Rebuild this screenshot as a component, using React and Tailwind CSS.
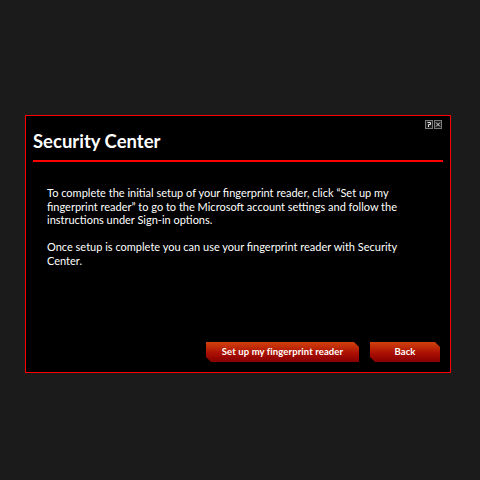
import React from 'react';

function HelpIcon() {
  return (
    <svg width="8" height="9" viewBox="0 0 8 9" className="block">
      <rect x="0.5" y="0.5" width="7" height="8" fill="#1c1c1c" stroke="#7a7a7a" />
      <path d="M2.5 2.5 H5.5 V4.5 H3.5 V7" fill="none" stroke="#e6e6e6" strokeWidth="1" />
    </svg>
  );
}

function CloseIcon() {
  return (
    <svg width="8" height="9" viewBox="0 0 8 9" className="block">
      <rect x="0.5" y="0.5" width="7" height="8" fill="#1c1c1c" stroke="#7a7a7a" />
      <path d="M2 2.5 L6 6.5 M6 2.5 L2 6.5" fill="none" stroke="#e6e6e6" strokeWidth="1" />
    </svg>
  );
}

function RedButton({ children, className }) {
  return (
    <button
      type="button"
      className={
        'h-[20px] bg-gradient-to-b from-[#d0400c] via-[#b01204] to-[#860000] text-white font-bold text-[9.5px] tracking-[0.1px] [clip-path:polygon(0_0,calc(100%-5px)_0,100%_5px,100%_100%,5px_100%,0_calc(100%-5px))] ' +
        className
      }
    >
      {children}
    </button>
  );
}

export default function App() {
  return (
    <div className="w-[480px] h-[480px] bg-[#1b1b1b] pt-[115px] pl-[25px] font-['Lato','Liberation_Sans',sans-serif]">
      <div className="w-[426px] h-[258px] border border-[#ff0000] bg-black flex flex-col px-[7px]">
        <div className="flex justify-end gap-[1px] pt-[4px] pr-[1px] h-[13px]">
          <HelpIcon />
          <CloseIcon />
        </div>
        <h1 className="text-white font-bold text-[18.5px] leading-[22px] pt-[1px]">Security Center</h1>
        <div className="mt-[8px] border-b-2 border-[#ff0000]"></div>

        <div className="text-white text-[11px] leading-[13.5px] pl-[14px] mt-[24px]">
          <p className="whitespace-nowrap">To complete the initial setup of your fingerprint reader, click “Set up my</p>
          <p className="whitespace-nowrap">fingerprint reader” to go to the Microsoft account settings and follow the</p>
          <p className="whitespace-nowrap">instructions under Sign-in options.</p>
          <p className="whitespace-nowrap mt-[13.5px]">Once setup is complete you can use your fingerprint reader with Security</p>
          <p className="whitespace-nowrap">Center.</p>
        </div>

        <div className="mt-auto mb-[10px] flex justify-end gap-[11px] pr-[3px]">
          <RedButton className="w-[153px]">Set up my fingerprint reader</RedButton>
          <RedButton className="w-[70px]">Back</RedButton>
        </div>
      </div>
    </div>
  );
}
